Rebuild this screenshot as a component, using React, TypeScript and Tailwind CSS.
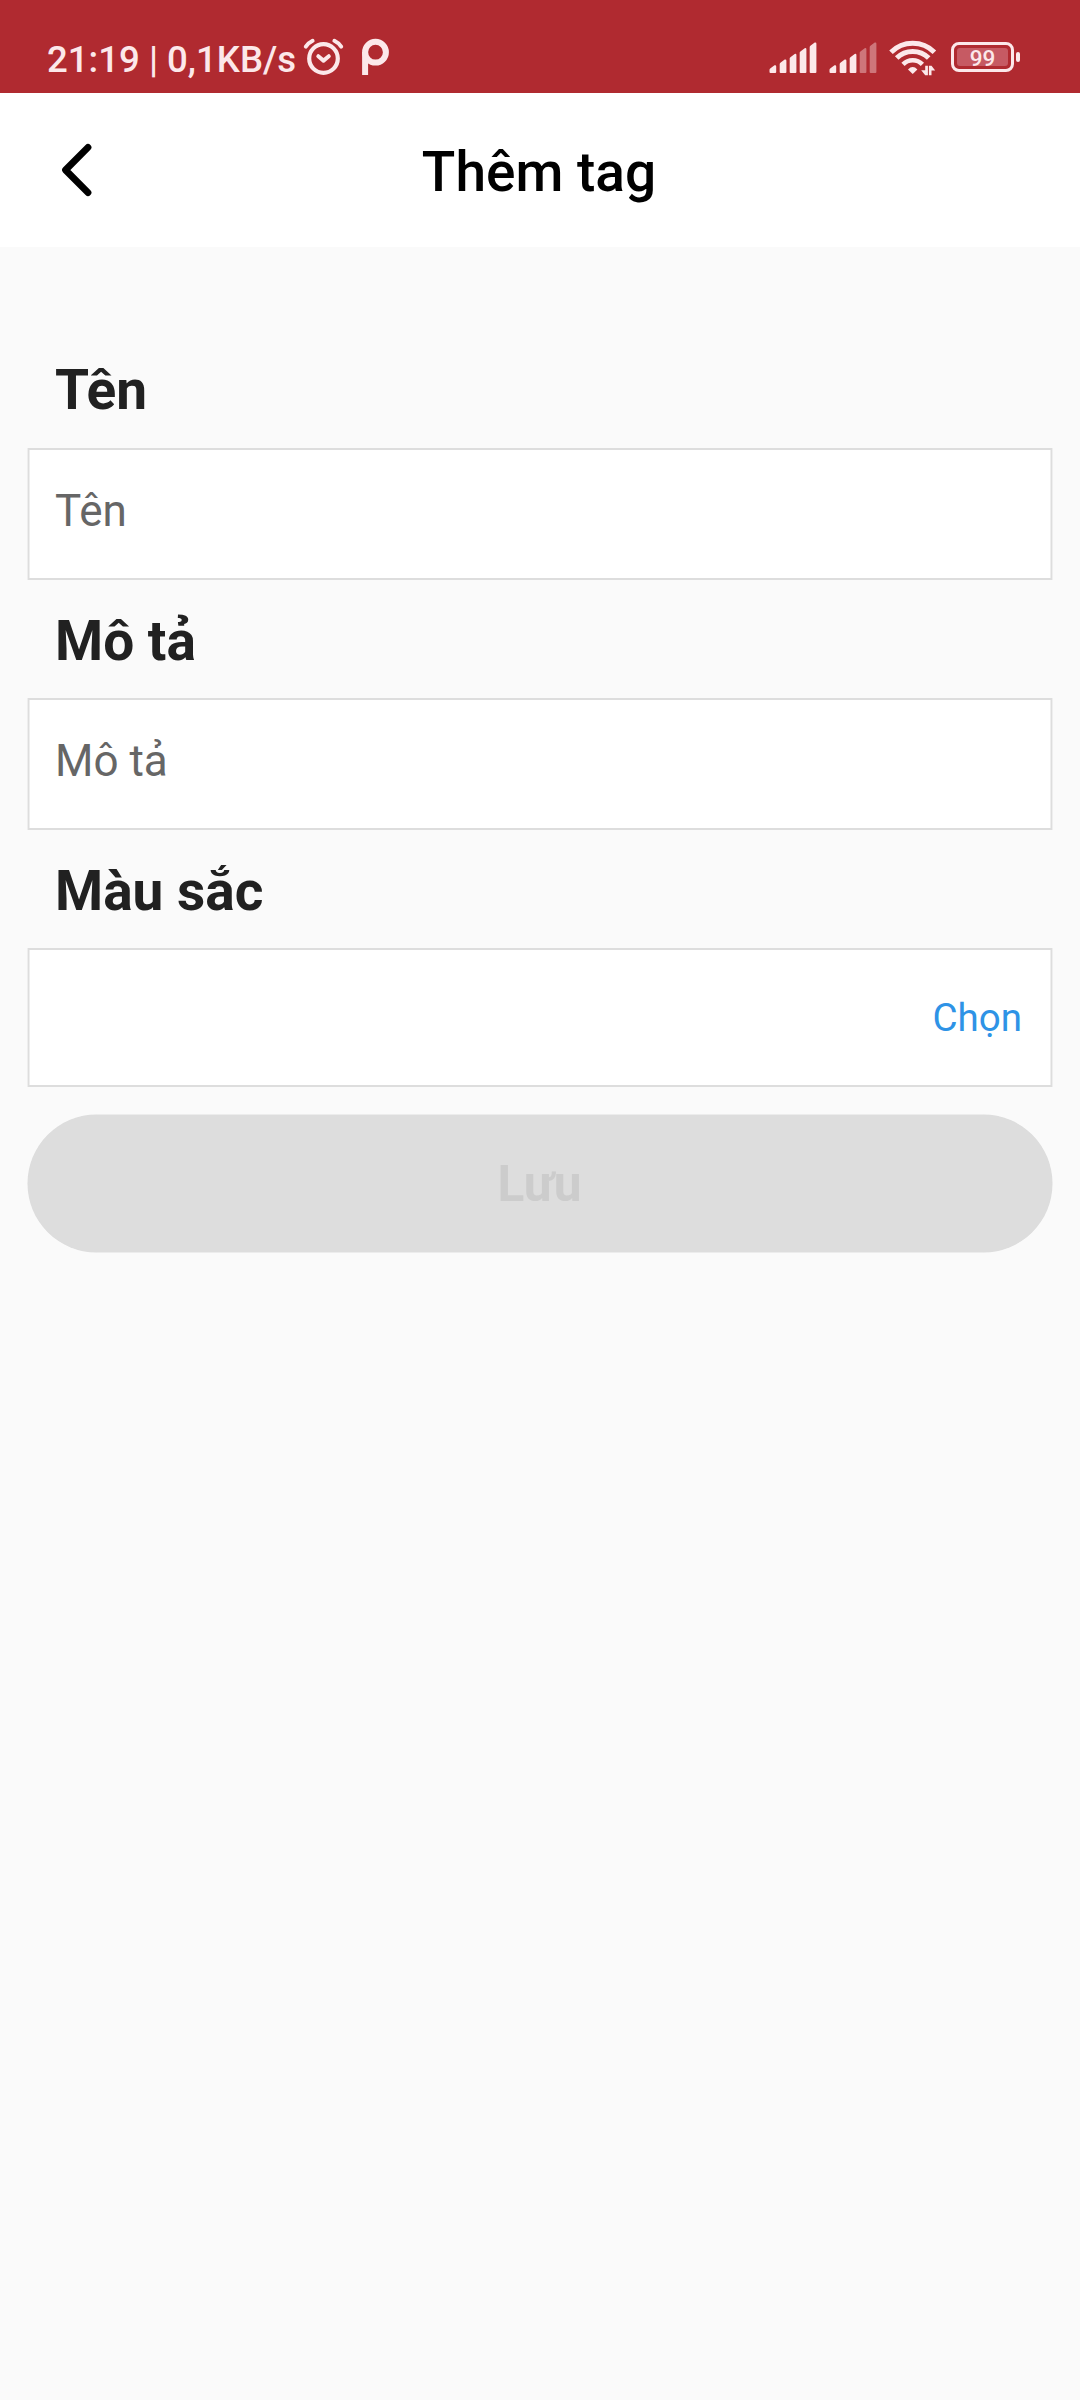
import React from "react";

const BARS = [
  { x: 0.5, top: 22.7 },
  { x: 10.7, top: 17 },
  { x: 20.7, top: 11.3 },
  { x: 30.7, top: 5.6 },
  { x: 40.7, top: 0 },
];

function Signal({ strength }: { strength: number }) {
  return (
    <svg width="48" height="32" viewBox="0 0 48 32" className="block shrink-0">
      {BARS.map((b, i) => (
        <path
          key={b.x}
          d={`M${b.x + 1} ${b.top + 3.6}L${b.x + 5} ${b.top + 0.6}Q${b.x + 6.7} ${b.top} ${b.x + 6.7} ${b.top + 1.8}V30Q${b.x + 6.7} 31 ${b.x + 5.7} 31H${b.x + 1}Q${b.x} 31 ${b.x} 30V${b.top + 5}Q${b.x} ${b.top + 4.2} ${b.x + 1} ${b.top + 3.6}Z`}
          fill="#fce8ea"
          opacity={i < strength ? 1 : 0.4}
        />
      ))}
    </svg>
  );
}

function AlarmIcon() {
  return (
    <svg width="42" height="40" viewBox="303 37 42 40" fill="none" stroke="#fce8ea" strokeLinecap="round" strokeLinejoin="round" className="block shrink-0">
      <circle cx="323.5" cy="58.5" r="14.3" strokeWidth="4.2" />
      <path d="M318.3 56.2L323.5 60.6L328.8 56.2" strokeWidth="4" />
      <path d="M305.8 46.6Q308.5 42.8 312.6 40.8M341.2 46.6Q338.5 42.8 334.4 40.8" strokeWidth="4" />
    </svg>
  );
}

function ParkIcon() {
  return (
    <svg width="28" height="38" viewBox="362 38 28 38" fill="none" stroke="#fce8ea" strokeWidth="6" className="block shrink-0">
      <circle cx="375.5" cy="52.2" r="10.4" />
      <path d="M365.1 52V75" />
    </svg>
  );
}

function WifiIcon() {
  return (
    <svg width="48" height="38" viewBox="889 38 48 38" fill="none" stroke="#fce8ea" className="block shrink-0">
      <path d="M891 52.3A30.7 30.7 0 0 1 934.4 52.3" strokeWidth="5" />
      <path d="M896.7 58A22.7 22.7 0 0 1 928.7 58" strokeWidth="5" />
      <path d="M903 64.3A13.7 13.7 0 0 1 922.4 64.3" strokeWidth="4.6" />
      <path d="M908 69.4Q912.7 64.6 917.4 69.4L912.7 74Z" fill="#fce8ea" stroke="none" />
      <path d="M925.2 65.8H927.9V75.2H925.2L921.2 70.2H925.2ZM928.9 65.8H931.5L935.2 70.6H931.5V75.2H928.9Z" fill="#fce8ea" stroke="none" />
    </svg>
  );
}

function Battery() {
  return (
    <div className="flex items-center gap-[2px]">
      <div className="flex h-[30px] w-[63px] rounded-[8px] border-3 border-[#fce8ea] p-[3px]">
        <div className="flex flex-1 items-center justify-center rounded-[3px] bg-[#c65a63] text-[22.5px] leading-[18px] font-medium text-[#fce8ea]">
          <span className="relative top-[1px]">99</span>
        </div>
      </div>
      <div className="h-[10px] w-[4px] rounded-[2px] bg-[#fce8ea]" />
    </div>
  );
}

function Field({ label, children, tall, nudge }: { label: string; children?: React.ReactNode; tall?: boolean; nudge?: boolean }) {
  return (
    <section>
      <h2
        className={
          "pl-[27px] text-[55px] leading-[64px] font-bold text-[#212121] " +
          (nudge ? "mb-[25px] pt-px" : "mb-[26px]")
        }
      >
        {label}
      </h2>
      <div
        className={
          "flex items-center border-x border-y-2 border-[#dddddd] bg-white pr-[30px] pl-[26px] shadow-[1px_0_0_#eeeeee,-1px_0_0_#eeeeee,inset_1px_0_0_#eeeeee,inset_-1px_0_0_#eeeeee] " +
          (tall ? "h-[139px]" : "h-[132px]")
        }
      >
        {children}
      </div>
    </section>
  );
}

const inputClass =
  "w-full bg-transparent pb-[7px] text-[44px] leading-[52px] text-[#212121] outline-none placeholder:text-[#666666] placeholder:opacity-100";

export default function App() {
  return (
    <div className="flex h-[2400px] w-[1080px] flex-col bg-[#fafafa] font-['Roboto',sans-serif]">
      <div className="flex h-[93px] items-start justify-between bg-[#b02a30] pr-[60px] pl-[47px]">
        <div className="flex">
          <span className="mt-[38px] w-[256px] text-[36.6px] leading-[44px] font-medium whitespace-nowrap text-[#fce8ea]">
            21:19 | 0,1KB/s
          </span>
          <div className="mt-[37px]">
            <AlarmIcon />
          </div>
          <div className="mt-[38px] ml-[17px]">
            <ParkIcon />
          </div>
        </div>
        <div className="flex items-start">
          <div className="mt-[42px] mr-[12px]">
            <Signal strength={5} />
          </div>
          <div className="mt-[42px] mr-[12px]">
            <Signal strength={3} />
          </div>
          <div className="mt-[38px] mr-[14px]">
            <WifiIcon />
          </div>
          <div className="mt-[42px]">
            <Battery />
          </div>
        </div>
      </div>

      <header className="grid h-[154px] grid-cols-[1fr_auto_1fr] items-center bg-white px-[58px]">
        <button aria-label="Back" className="justify-self-start">
          <svg width="38" height="56" viewBox="58 142 38 56" fill="none" stroke="#000" strokeWidth="6.8" strokeLinecap="round" strokeLinejoin="round" className="block">
            <path d="M88 147.3L65.5 170L88 192.7" />
          </svg>
        </button>
        <h1 className="pt-1 pr-[2px] text-[55px] leading-[64px] font-medium text-black">Thêm tag</h1>
      </header>

      <main className="flex flex-col gap-[28px] px-[28px] pt-[111px]">
        <Field label="Tên">
          <input className={inputClass} placeholder="Tên" />
        </Field>
        <Field label="Mô tả" nudge>
          <input className={inputClass} placeholder="Mô tả" />
        </Field>
        <Field label="Màu sắc" tall nudge>
          <button className="-mr-px ml-auto text-[38.5px] leading-[46px] text-[#2e93e6]">Chọn</button>
        </Field>
        <button className="h-[137px] rounded-full bg-[#dddddd] pr-px text-[49.5px] leading-[58px] font-bold text-[#cccccc] shadow-[0_0_0_0.5px_#dddddd]">
          Lưu
        </button>
      </main>
    </div>
  );
}
